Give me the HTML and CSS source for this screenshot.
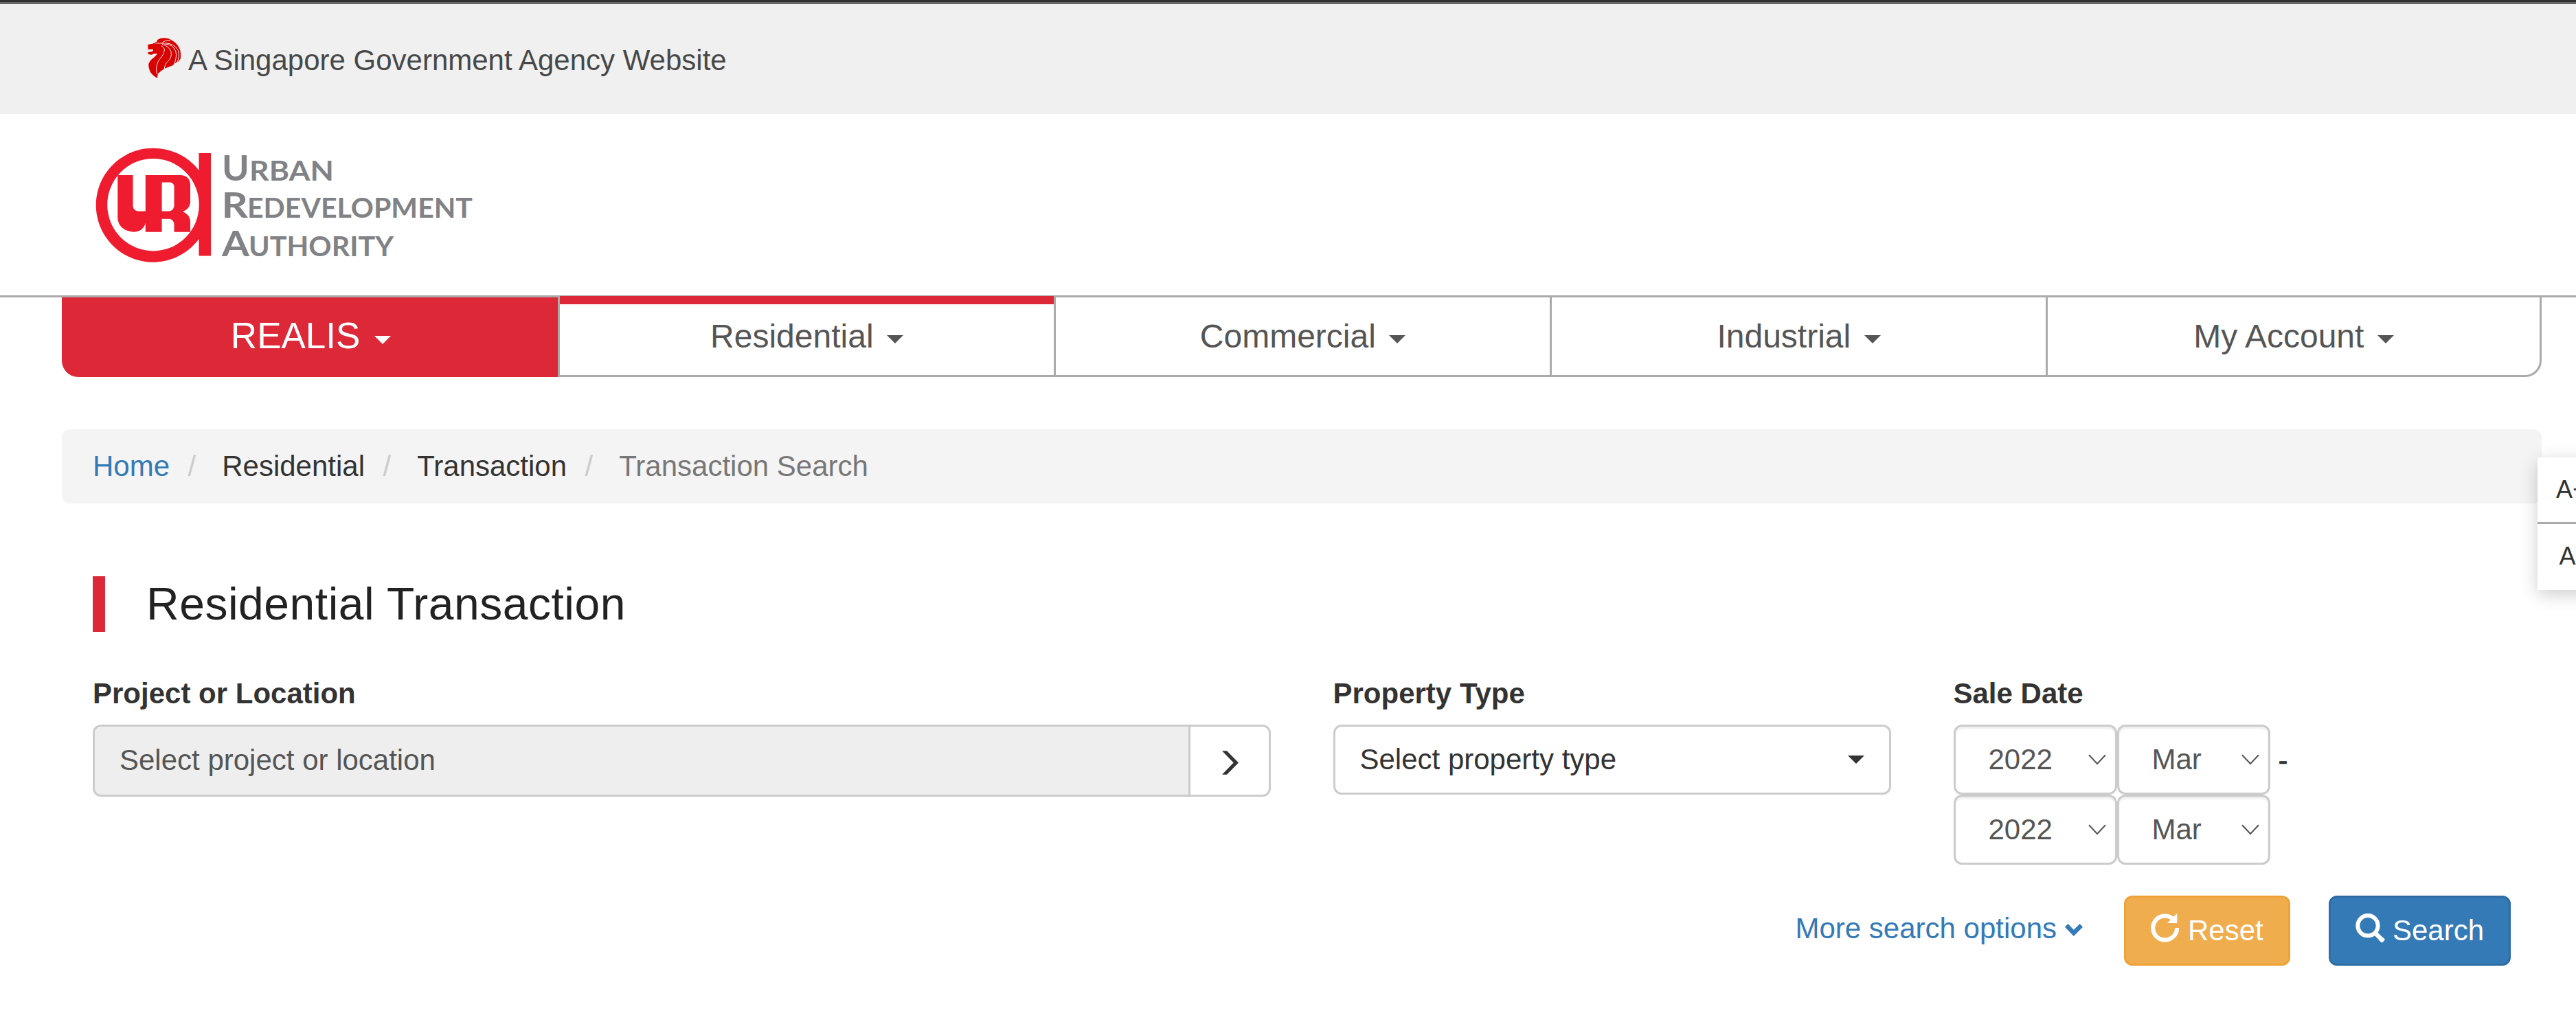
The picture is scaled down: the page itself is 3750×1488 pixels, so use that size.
FILE: index.html
```html
<!DOCTYPE html>
<html lang="en">
<head>
<meta charset="utf-8">
<title>REALIS - Residential Transaction</title>
<link rel="stylesheet" href="styles.css">
</head>
<body>
<div class="masthead">
  <svg class="lion" viewBox="75 40 150 183" aria-hidden="true">
    <path fill="#d90000" d="M77 72 L98 69 Q101 62 114 60 L118 52 Q126 45 150 44 Q168 45 181 54 Q208 70 217 98 Q221 118 218 136 L205 151 L199 150 L186 163 L150 177 Q128 190 119 201 L117 219 Q97 208 86 192 Q77 172 79 157 Q84 142 104 128 L118 113 L102 112 L93 117 L77 115 L76 106 L95 103 Q101 98 98 94 L88 93 L76 95 L78 87 L75 83 Z"/>
    <g fill="none" stroke="#f0f0f0" stroke-width="3">
      <path d="M97 65 Q125 68 149 67 M137 66 Q150 53 174 54"/>
      <path d="M134 79 Q148 84 148 97 Q147 115 131 132 Q107 157 115 201"/>
      <path d="M137 71 Q170 80 177 104 Q182 128 163 146 Q149 158 148 180"/>
      <path d="M148 70 Q184 70 197 101 Q205 126 188 164"/>
      <path d="M151 66 Q194 69 208 98 Q216 124 203 153"/>
    </g>
  </svg>
  <span>A Singapore Government Agency Website</span>
</div>

<header class="site-header">
  <svg class="logo" viewBox="0 0 560 170" role="img" aria-label="Urban Redevelopment Authority">
    <g fill="#ee1c2e">
      <path fill-rule="evenodd" d="M82 .7A83 83 0 0 1 148.5 33V8H166V157.5H148.5V133A83 83 0 1 1 82 .7ZM82 16A66.8 67.2 0 1 0 82 150.400A66.8 67.2 0 1 0 82 16Z"/>
      <path fill-rule="evenodd" d="M30.300 40H52.500V85Q53 91.500 60 92.500H70.800V40H121Q135 40 136 54V80Q134.500 90 125 93Q135 97 136 107V122.700H112.500V112Q112 104.500 105.500 103.700H94.600V122.700H70.800V109.500Q67.500 122.500 53 122.700Q31 120 30.300 102ZM94.600 50.500V92.500H106Q111.500 91 112.500 85V56Q111.500 51 106.500 50.500Z"/>
    </g>
    <g class="logo-text">
      <text class="cap" x="182" y="47.500" textLength="40" lengthAdjust="spacingAndGlyphs">U</text>
      <text x="222" y="47.500" textLength="123" lengthAdjust="spacingAndGlyphs">RBAN</text>
      <text class="cap" x="181.500" y="102.300" textLength="38.500" lengthAdjust="spacingAndGlyphs">R</text>
      <text x="219" y="102.300" textLength="328" lengthAdjust="spacingAndGlyphs">EDEVELOPMENT</text>
      <text class="cap" x="182" y="157.500" textLength="40" lengthAdjust="spacingAndGlyphs">A</text>
      <text x="221" y="157.500" textLength="211" lengthAdjust="spacingAndGlyphs">UTHORITY</text>
    </g>
  </svg>
</header>

<nav class="main-nav">
  <a class="nav-item brand">REALIS <b class="caret"></b></a>
  <a class="nav-item active">Residential <b class="caret"></b></a>
  <a class="nav-item">Commercial <b class="caret"></b></a>
  <a class="nav-item">Industrial <b class="caret"></b></a>
  <a class="nav-item last">My Account <b class="caret"></b></a>
</nav>

<ol class="breadcrumb">
  <li><a class="link">Home</a></li>
  <li>Residential</li>
  <li>Transaction</li>
  <li class="current">Transaction Search</li>
</ol>

<main class="content">
  <h1 class="page-title">Residential Transaction</h1>
  <form class="search-form">
    <div class="field">
      <label>Project or Location</label>
      <div class="input-group">
        <div class="input-readonly">Select project or location</div>
        <button type="button" class="addon" aria-label="Choose">
          <svg width="24" height="35" viewBox="180 128 72 104"><path fill="#333" d="M180 128H201L252 180L201 232H180L230 180Z"/></svg>
        </button>
      </div>
    </div>
    <div class="field">
      <label>Property Type</label>
      <div class="dropdown"><span>Select property type</span><b class="caret"></b></div>
    </div>
    <div class="field">
      <label>Sale Date</label>
      <div class="date-row">
        <div class="select year"><span>2022</span><svg class="chev" viewBox="0 0 26 16"><path d="M1 1.200L13 14L25 1.200"/></svg></div>
        <div class="select month"><span>Mar</span><svg class="chev" viewBox="0 0 26 16"><path d="M1 1.200L13 14L25 1.200"/></svg></div>
        <span class="dash">-</span>
      </div>
      <div class="date-row">
        <div class="select year"><span>2022</span><svg class="chev" viewBox="0 0 26 16"><path d="M1 1.200L13 14L25 1.200"/></svg></div>
        <div class="select month"><span>Mar</span><svg class="chev" viewBox="0 0 26 16"><path d="M1 1.200L13 14L25 1.200"/></svg></div>
      </div>
    </div>
  </form>
  <div class="actions">
    <a class="link more">More search options<svg width="26" height="18" viewBox="80 136 77 53"><path fill="#337ab7" d="M80 150L93 136L118 162L144 136L157 150L118 189Z"/></svg></a>
    <button type="button" class="btn reset"><svg width="42" height="42" viewBox="455 90 126 126"><path fill="none" stroke="#fff" stroke-width="18.500" d="M569.500 153A52.500 52.500 0 1 1 549 111.500"/><path fill="#fff" d="M570 90V132H527L542 117L552 106Z"/></svg>Reset</button>
    <button type="button" class="btn search"><svg width="43" height="43" viewBox="1348 89 129 129"><circle cx="1402" cy="142" r="44" fill="none" stroke="#fff" stroke-width="18"/><path stroke="#fff" stroke-width="19" d="M1432 172L1462 202"/><path stroke="#fff" stroke-width="13" stroke-linecap="round" stroke-linejoin="round" fill="#fff" d="M1463 209L1469 203L1460 196L1456 202Z"/></svg>Search</button>
  </div>
</main>

<aside class="font-size">
  <a>A+</a>
  <a>A-</a>
</aside>
</body>
</html>
```
FILE: styles.css
```css
* { box-sizing: border-box; }
html { overflow: hidden; }
body {
  margin: 0;
  width: 3750px;
  height: 1488px;
  overflow: hidden;
  position: relative;
  background: #fff;
  color: #333;
  font: 42px/60px "Liberation Sans", Arial, sans-serif;
}
button { font: inherit; margin: 0; padding: 0; }
.link { color: #337ab7; }

.masthead {
  display: flex;
  align-items: flex-start;
  height: 166px;
  padding: 51px 0 0 215px;
  background: #f0f0f0;
  border-top: 3px solid #333;
  box-shadow: inset 0 3px #666;
  color: #484848;
}
.masthead span { padding-top: 4px; }
.lion { width: 50px; height: 61px; margin-right: 9px; }

.site-header {
  height: 267px;
  padding: 49px 0 0 141px;
  border-bottom: 3px solid #aaa;
}
.logo { display: block; width: 560px; height: 170px; overflow: visible; }
.logo-text {
  fill: #808285;
  font-family: Lato, sans-serif;
  font-weight: 700;
  font-size: 41px;
}
.logo-text .cap { font-size: 52px; }

.main-nav { display: flex; width: 3610px; margin-left: 90px; }
.nav-item {
  width: 722px;
  height: 116px;
  padding-top: 30px;
  border-left: 3px solid #aaa;
  border-bottom: 3px solid #aaa;
  color: #555;
  font-size: 48px;
  line-height: 54px;
  text-align: center;
}
.nav-item.brand {
  padding-top: 26px;
  background: #dd2838;
  border-color: #dd2838;
  border-bottom-left-radius: 24px;
  color: #fff;
  font-size: 53px;
  line-height: 60px;
}
.nav-item.active {
  height: 118px;
  margin-top: -2px;
  padding-top: 32px;
  box-shadow: inset 0 12px #dd2838;
}
.nav-item.last { border-right: 3px solid #aaa; border-bottom-right-radius: 24px; }
.caret {
  display: inline-block;
  width: 0;
  height: 0;
  margin-left: 6px;
  vertical-align: 6px;
  border: 12px solid transparent;
  border-top-color: currentColor;
  border-bottom: 0;
}

.breadcrumb {
  display: flex;
  width: 3610px;
  height: 108px;
  margin: 76px 0 0 90px;
  padding: 24px 45px;
  list-style: none;
  background: #f4f4f4;
  border-radius: 12px;
}
.breadcrumb li + li::before {
  content: "/";
  margin: 0 38px 0 26.500px;
  color: #ccc;
}
.breadcrumb .current { color: #777; }

.content { width: 3610px; margin-left: 90px; padding: 106px 45px 0; }
.page-title {
  height: 81px;
  margin: 0;
  padding-left: 60px;
  border-left: 18px solid #dd2838;
  color: #222;
  font-size: 66px;
  font-weight: 400;
  line-height: 80px;
  letter-spacing: .520px;
}
.search-form {
  display: grid;
  grid-template-columns: 1715px 812.500px 1fr;
  gap: 90.500px;
  margin-top: 59px;
}
.field label { display: block; height: 76px; padding-top: 1px; font-weight: 700; }
.input-group { display: flex; height: 105px; }
.input-readonly {
  flex: 1;
  padding: 19px 36px;
  background: #eee;
  border: 3px solid #ccc;
  border-right: 0;
  border-radius: 12px 0 0 12px;
  color: #555;
}
.addon {
  width: 120px;
  padding-left: 1px;
  background: #fff;
  border: 3px solid #ccc;
  border-radius: 0 12px 12px 0;
}
.addon svg { display: block; margin: 5px auto 0; }
.dropdown {
  display: flex;
  align-items: center;
  justify-content: space-between;
  height: 102px;
  padding: 0 36px;
  background: #fff;
  border: 3px solid #ccc;
  border-radius: 12px;
}
.date-row { display: flex; height: 102px; }
.select {
  display: flex;
  align-items: center;
  justify-content: space-between;
  height: 102px;
  background: #fff;
  border: 3px solid #ccc;
  border-radius: 12px;
  box-shadow: inset 0 3px 3px rgba(0, 0, 0, .075);
  color: #555;
}
.year { width: 238px; padding: 0 13px 0 48px; }
.month { width: 223px; padding: 0 13px 0 48px; }
.chev { width: 26px; height: 16px; fill: none; stroke: #555; stroke-width: 2; }
.dash { margin: 23px 0 0 12px; -webkit-text-stroke: .600px #333; }

.actions {
  display: flex;
  justify-content: flex-end;
  align-items: flex-start;
  gap: 56px;
  margin-top: 45px;
}
.more { margin: 18px 4px 0 0; white-space: nowrap; }
.more svg { margin-left: 12px; vertical-align: 3px; }
.btn {
  display: flex;
  height: 102px;
  padding: 18px 0 0 36px;
  border: 3px solid;
  border-radius: 12px;
  color: #fff;
}
.btn svg { margin: 5px 12px 0 0; }
.reset { width: 242px; background: #f0ad4e; border-color: #eea236; }
.search { width: 265px; background: #337ab7; border-color: #2e6da4; }
.search svg { margin-right: 11px; }

/* text-size switcher, partly past the right edge of the page */
.font-size {
  position: absolute;
  top: 666px;
  left: 3694px;
  width: 99px;
  background: #fff;
  box-shadow: 0 6px 24px rgba(0, 0, 0, .2);
  font-size: 36px;
  line-height: 94px;
  text-align: center;
}
.font-size a { display: block; height: 96px; }
.font-size a:first-child { height: 97px; border-bottom: 3px solid #aaa; }
```
